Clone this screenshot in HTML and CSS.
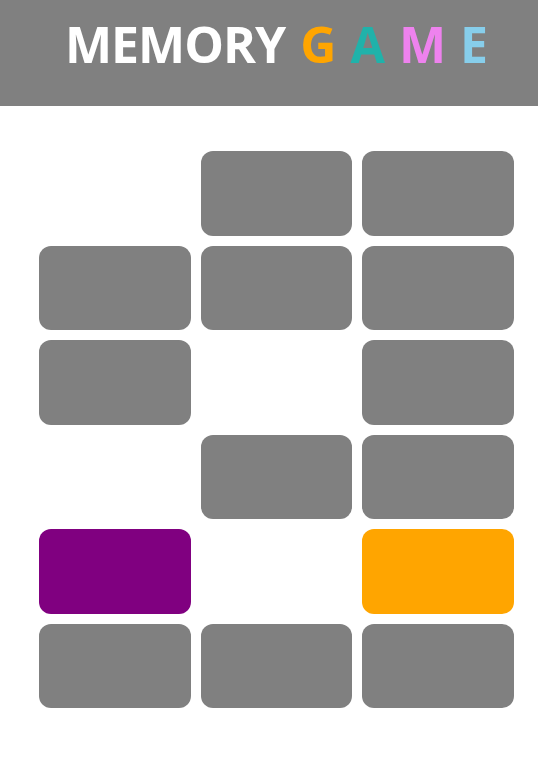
FILE: index.html
```html
<!DOCTYPE html>
<html>
<head>
<meta charset="utf-8">
<link rel="stylesheet" href="styles.css">
</head>
<body>
<header class="top">
  <h1 class="title">MEMORY <span class="g">G</span> <span class="a">A</span> <span class="m">M</span> <span class="e">E</span></h1>
</header>
<main class="board">
  <div class="card gone"></div>
  <div class="card"></div>
  <div class="card"></div>
  <div class="card"></div>
  <div class="card"></div>
  <div class="card"></div>
  <div class="card"></div>
  <div class="card gone"></div>
  <div class="card"></div>
  <div class="card gone"></div>
  <div class="card"></div>
  <div class="card"></div>
  <div class="card purple"></div>
  <div class="card gone"></div>
  <div class="card orange"></div>
  <div class="card"></div>
  <div class="card"></div>
  <div class="card"></div>
</main>
</body>
</html>
```
FILE: styles.css
```css
html, body {
  margin: 0;
  padding: 0;
  background: #ffffff;
}
.top {
  background: #808080;
  height: 106px;
  box-sizing: border-box;
  padding-top: 9px;
  display: flex;
  align-items: flex-start;
  justify-content: center;
}
.title {
  margin: 0;
  font-family: "Open Sans", "Liberation Sans", sans-serif;
  font-weight: 700;
  font-size: 50px;
  line-height: 70px;
  color: #ffffff;
  letter-spacing: -1px;
  word-spacing: 3px;
  padding-left: 14px;
}
.g { color: #ffa500; }
.a { color: #20b2aa; }
.m { color: #ee82ee; }
.e { color: #87ceeb; }
.board {
  display: grid;
  grid-template-columns: repeat(3, 1fr);
  grid-auto-rows: 84.5px;
  gap: 10px;
  padding: 45px 24px 0 39px;
}
.card {
  background: #808080;
  border-radius: 12px;
}
.card.gone { visibility: hidden; }
.card.purple { background: #800080; }
.card.orange { background: #ffa500; }
```
